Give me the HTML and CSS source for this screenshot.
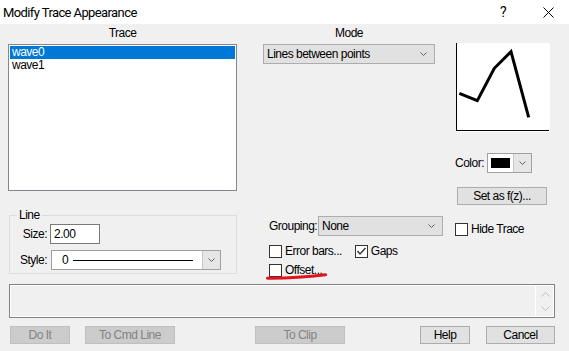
FILE: index.html
```html
<!DOCTYPE html>
<html lang="en">
<head>
  <meta charset="UTF-8">
  <meta name="viewport" content="width=device-width, initial-scale=1.0">
  <title>Modify Trace Appearance</title>
  <link rel="stylesheet" href="styles.css">
</head>
<body>
  <div class="dialog">
    <div class="titlebar">
      <span class="title">Modify Trace Appearance</span>
      <span class="title-help">?</span>
      <svg class="title-close" width="11" height="11" viewBox="0 0 11 11">
        <path d="M0.5 0.5 L10.5 10.5 M10.5 0.5 L0.5 10.5" stroke="#000" stroke-width="1" fill="none"/>
      </svg>
    </div>

    <div class="main">
      <!-- Trace list + line group -->
      <div class="col-trace">
        <div class="caption">Trace</div>
        <div class="listbox">
          <div class="list-item selected">wave0</div>
          <div class="list-item">wave1</div>
        </div>
        <fieldset class="line-group">
          <legend>Line</legend>
          <div class="line-grid">
            <span class="field-label">Size:</span>
            <div class="textbox">2.00</div>
            <span class="field-label">Style:</span>
            <div class="style-combo">
              <div class="style-value">
                <span>0</span>
                <span class="style-line"></span>
              </div>
              <div class="drop-btn">
                <svg width="7" height="4" viewBox="0 0 7 4"><polyline points="0.5,0.5 3.5,3.5 6.5,0.5" fill="none" stroke="#606060"/></svg>
              </div>
            </div>
          </div>
        </fieldset>
      </div>

      <!-- Mode + grouping -->
      <div class="col-mode">
        <div class="caption mode-caption">Mode</div>
        <div class="combo mode-combo">
          <span>Lines between points</span>
          <svg width="7" height="4" viewBox="0 0 7 4"><polyline points="0.5,0.5 3.5,3.5 6.5,0.5" fill="none" stroke="#606060"/></svg>
        </div>
        <div class="grouping-row">
          <span>Grouping:</span>
          <div class="combo group-combo">
            <span>None</span>
            <svg width="7" height="4" viewBox="0 0 7 4"><polyline points="0.5,0.5 3.5,3.5 6.5,0.5" fill="none" stroke="#606060"/></svg>
          </div>
        </div>
        <div class="check-row errbar-row">
          <label class="check"><span class="box"></span>Error bars...</label>
          <label class="check gaps">
            <span class="box">
              <svg width="11" height="11" viewBox="0 0 11 11"><polyline points="1.5,5 4,8 9.5,2" fill="none" stroke="#333" stroke-width="1.4"/></svg>
            </span>Gaps
          </label>
        </div>
        <div class="check-row offset-row">
          <label class="check"><span class="box"></span>Offset...</label>
          <svg class="scribble" width="62" height="8" viewBox="0 0 62 8">
            <path d="M1.5 5.2 Q 30 5.4 59.5 1.8" fill="none" stroke="#e3131b" stroke-width="3" stroke-linecap="round"/>
          </svg>
        </div>
      </div>

      <!-- Preview + colour -->
      <div class="col-preview">
        <svg class="preview" width="94" height="89" viewBox="0 0 94 89">
          <rect x="0" y="0" width="94" height="89" fill="#fff"/>
          <path d="M0.5 0 V88 M0 87.5 H93" stroke="#000" stroke-width="1" fill="none"/>
          <polyline points="3.3,50.3 21.3,57.7 38.3,25.3 55,8.7 72.7,74.3" fill="none" stroke="#000" stroke-width="3"/>
        </svg>
        <div class="color-row">
          <span>Color:</span>
          <div class="color-combo">
            <div class="swatch-cell"><span class="swatch"></span></div>
            <div class="drop-btn">
              <svg width="7" height="4" viewBox="0 0 7 4"><polyline points="0.5,0.5 3.5,3.5 6.5,0.5" fill="none" stroke="#606060"/></svg>
            </div>
          </div>
        </div>
        <button class="btn set-btn">Set as f(z)...</button>
        <label class="check hide-trace"><span class="box"></span>Hide Trace</label>
      </div>
    </div>

    <div class="message">
      <div class="message-text"></div>
      <div class="message-scroll">
        <svg width="9" height="5" viewBox="0 0 9 5"><polyline points="0.5,4.5 4.5,0.5 8.5,4.5" fill="none" stroke="#c0c0c0"/></svg>
        <svg width="9" height="5" viewBox="0 0 9 5"><polyline points="0.5,0.5 4.5,4.5 8.5,0.5" fill="none" stroke="#c0c0c0"/></svg>
      </div>
    </div>

    <div class="button-row">
      <button class="btn disabled btn-doit">Do It</button>
      <button class="btn disabled btn-cmd">To Cmd Line</button>
      <button class="btn disabled btn-clip">To Clip</button>
      <button class="btn btn-help">Help</button>
      <button class="btn btn-cancel">Cancel</button>
    </div>
  </div>
</body>
</html>
```

FILE: styles.css
```css
/* Dialog frame */
* {
  box-sizing: border-box;
}

body {
  margin: 0;
  padding: 0;
  background: #f0f0f0;
  font-family: "Liberation Sans", Arial, sans-serif;
  font-size: 12px;
  letter-spacing: -0.5px;
  color: #000;
}

.dialog {
  width: 569px;
  height: 351px;
  overflow: hidden;
}

.titlebar {
  height: 24px;
  background: #fff;
  display: flex;
  align-items: center;
  padding-left: 3px;
}

.title {
  font-family: Roboto, sans-serif;
  font-size: 13px;
  letter-spacing: -0.6px;
  flex: 1;
}

.title-help {
  font-family: Roboto, sans-serif;
  font-size: 14px;
  width: 8px;
  text-align: center;
  margin-right: 36px;
}

.title-close {
  margin-right: 15px;
}

/* Main area */
.main {
  display: flex;
  height: 256px;
}

.caption {
  height: 14px;
  line-height: 14px;
  margin-top: 2px;
  text-align: center;
}

.col-trace {
  margin-left: 8px;
  width: 229px;
}

.listbox {
  margin-top: 4px;
  height: 147px;
  border: 1px solid #828790;
  background: #fff;
  padding: 1px;
}

.list-item {
  height: 13px;
  line-height: 13px;
  padding-left: 2px;
}

.list-item.selected {
  background: #0078d7;
  color: #fff;
}

.line-group {
  margin: 17px 0 0 1px;
  width: 228px;
  border: 1px solid #dcdcdc;
  padding: 2px 0 3px 0;
}

.line-group legend {
  margin-left: 7px;
  padding: 0 2px;
  line-height: 14px;
}

.line-grid {
  display: grid;
  grid-template-columns: 37px auto;
  column-gap: 3px;
  row-gap: 6px;
  align-items: center;
}

.field-label {
  text-align: right;
}

.textbox {
  width: 50px;
  height: 20px;
  line-height: 18px;
  border: 1px solid #7a7a7a;
  background: #fff;
  padding-left: 3px;
}

.style-combo {
  margin-left: 1px;
  width: 170px;
  height: 20px;
  border: 1px solid #a0a0a0;
  background: #fff;
  display: flex;
}

.style-value {
  flex: 1;
  display: flex;
  align-items: center;
  padding-left: 10px;
}

.style-line {
  width: 120px;
  height: 1px;
  background: #000;
  margin-left: 5px;
}

.drop-btn {
  width: 18px;
  background: #e6e6e6;
  border-left: 1px solid #c8c8c8;
  display: flex;
  align-items: center;
  justify-content: center;
}

/* Mode column */
.col-mode {
  margin-left: 26px;
  width: 180px;
}

.mode-caption {
  width: 172px;
}

.combo {
  height: 20px;
  border: 1px solid #adadad;
  background: #e1e1e1;
  display: flex;
  align-items: center;
  justify-content: space-between;
  padding: 0 7px 0 3px;
}

.mode-combo {
  margin-top: 4px;
  width: 172px;
}

.grouping-row {
  margin-top: 152px;
  padding-left: 6px;
  display: flex;
  align-items: center;
  justify-content: space-between;
}

.group-combo {
  width: 125px;
}

.check-row {
  display: flex;
  padding-left: 6px;
  height: 13px;
  align-items: center;
}

.errbar-row {
  margin-top: 9px;
}

.offset-row {
  margin-top: 6px;
  position: relative;
}

.check {
  display: flex;
  align-items: center;
  gap: 3px;
  line-height: 13px;
}

.check .box {
  width: 13px;
  height: 13px;
  border: 1px solid #333;
  background: #fff;
  display: flex;
  align-items: center;
  justify-content: center;
}

.gaps {
  margin-left: 13px;
}

.scribble {
  position: absolute;
  left: 3px;
  top: 9px;
}

/* Preview column */
.col-preview {
  margin-left: 12px;
  width: 114px;
  display: flex;
  flex-direction: column;
  align-items: flex-start;
}

.preview {
  display: block;
  margin: 19px 0 0 1px;
}

.color-row {
  margin-top: 21px;
  display: flex;
  align-items: center;
  gap: 3px;
}

.color-combo {
  width: 45px;
  height: 20px;
  border: 1px solid #a0a0a0;
  display: flex;
  background: #fff;
}

.swatch-cell {
  flex: 1;
  display: flex;
  align-items: center;
  padding-left: 3px;
}

.swatch {
  width: 19px;
  height: 10px;
  background: #000;
}

.btn {
  font-family: inherit;
  font-size: 12px;
  letter-spacing: -0.5px;
  height: 18px;
  padding: 0;
  border: 1px solid #adadad;
  background: #e1e1e1;
  color: #000;
}

.btn.disabled {
  background: #cccccc;
  border-color: #bfbfbf;
  color: #838383;
}

.set-btn {
  margin: 14px 0 0 2px;
  width: 90px;
}

.hide-trace {
  margin-top: 18px;
}

/* Message box and buttons */
.message {
  margin: 4px 14px 0 9px;
  height: 34px;
  border: 1px solid #828282;
  box-shadow: inset 0 0 0 1px #fff;
  display: flex;
}

.message-text {
  flex: 1;
}

.message-scroll {
  width: 19px;
  border-left: 1px solid #fff;
  display: flex;
  flex-direction: column;
  align-items: center;
  justify-content: center;
  gap: 9px;
}

.button-row {
  margin-top: 8px;
  display: flex;
}

.btn-doit {
  margin-left: 10px;
  width: 60px;
}

.btn-cmd {
  margin-left: 15px;
  width: 90px;
}

.btn-clip {
  margin-left: 80px;
  width: 90px;
}

.btn-help {
  margin-left: 75px;
  width: 50px;
}

.btn-cancel {
  margin-left: 16px;
  width: 69px;
}
```
